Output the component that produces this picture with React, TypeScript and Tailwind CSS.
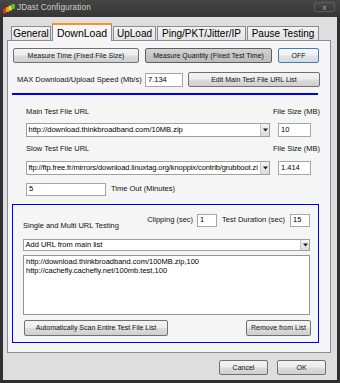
// App.tsx
// JDast Configuration dialog, DownLoad tab.

const btnBase =
  'flex items-center justify-center rounded-[2px] border text-[7px] leading-none text-[#111] whitespace-nowrap';
const btnNormal =
  'border-[#707070] bg-[linear-gradient(#f4f4f4_0%,#ebebeb_48%,#dddddd_52%,#cfcfcf_100%)]';

const Btn = ({ label, className, look = 'normal' }: { label: string; className: string; look?: 'normal' | 'pressed' | 'default' }) => {
  const style =
    look === 'pressed'
      ? 'border-[#5e5e5e] bg-[linear-gradient(#d3d3d3_0%,#c6c6c6_50%,#bdbdbd_100%)]'
      : look === 'default'
        ? 'border-[#3c7fb1] bg-[linear-gradient(#f6f8fa_0%,#eef1f3_48%,#e0e4e7_52%,#d6dbdf_100%)]'
        : btnNormal;
  return <div className={`${btnBase} ${style} ${className}`}>{label}</div>;
};

const TextBox = ({ value, className }: { value: string; className: string }) => (
  <div
    className={`flex items-center bg-white border border-[#a3a6ad] pl-[2px] text-[7.5px] leading-none text-black ${className}`}
  >
    {value}
  </div>
);

const Combo = ({ value, className, textClass = '' }: { value: string; className: string; textClass?: string }) => (
  <div className={`flex items-stretch bg-white border border-[#a0a0a0] ${className}`}>
    <div
      className={`flex-1 min-w-0 flex items-center pl-[1.5px] text-[7.5px] leading-none text-black overflow-hidden whitespace-nowrap ${textClass}`}
    >
      {value}
    </div>
    <div className="w-[9px] flex items-center justify-center border-l border-[#c4c4c4] bg-[linear-gradient(#f3f3f3,#dadada)]">
      <svg width="5" height="4" viewBox="0 0 5 4">
        <path d="M0 0.5h5L2.5 3.5z" fill="#1a1a1a" />
      </svg>
    </div>
  </div>
);

const Label = ({ text, className = '' }: { text: string; className?: string }) => (
  <div className={`text-[7.5px] leading-[10px] text-[#111] whitespace-nowrap ${className}`}>{text}</div>
);

const tabs = [
  { name: 'General', w: 'w-[40px]' },
  { name: 'DownLoad', w: 'w-[60px]', active: true },
  { name: 'UpLoad', w: 'w-[43px]' },
  { name: 'Ping/PKT/Jitter/IP', w: 'w-[89px]' },
  { name: 'Pause Testing', w: 'w-[72px]' },
];

export default function App() {
  return (
    <div className="w-[340px] h-[383px] flex flex-col overflow-hidden bg-[#303030] font-['Liberation_Sans',Arial,sans-serif]">
      {/* title bar */}
      <div className="h-[17px] flex items-center pl-[3px] pr-[5px] bg-[linear-gradient(#464646,#353535)]">
        <svg width="12" height="10" viewBox="0 0 12 10" className="shrink-0">
          <rect x="0" y="4.5" width="3.6" height="5" rx="1" fill="#e2312a" />
          <rect x="2.8" y="3" width="3.6" height="5" rx="1" fill="#f39a1e" />
          <rect x="5.6" y="1.5" width="3.6" height="5" rx="1" fill="#f2d523" />
          <rect x="8.4" y="0" width="3.6" height="5" rx="1" fill="#5cbf2a" />
        </svg>
        <div className="ml-[2px] text-[8.2px] leading-none text-[#cfcfcf] tracking-[0.1px]">JDast Configuration</div>
        <div className="ml-auto mb-[3px] w-[21px] h-[10px] rounded-[2px] border border-[#5d5d5d] bg-[linear-gradient(#4a4a4a,#383838)] flex items-center justify-center text-[7px] leading-none text-[#bdbdbd]">
          x
        </div>
      </div>

      {/* client area */}
      <div className="flex-1 mx-[3px] mb-[3px] bg-[#dedede] flex flex-col">
        {/* tab strip */}
        <div className="relative z-10 h-[23px] flex items-end gap-[1px] pl-[8px]">
          {tabs.map((t) =>
            t.active ? (
              <div
                key={t.name}
                className={`${t.w} h-[18px] -mb-px flex items-center justify-center bg-[#f5f5f5] border-x border-[#898c95] border-t-2 border-t-[#f0962a] text-[10.5px] leading-none text-black`}
              >
                {t.name}
              </div>
            ) : (
              <div
                key={t.name}
                className={`${t.w} h-[14px] flex items-center justify-center border border-b-0 border-[#898c95] bg-[linear-gradient(#f3f3f3,#e2e2e2)] text-[10px] leading-none text-black`}
              >
                {t.name}
              </div>
            ),
          )}
        </div>

        {/* tab panel */}
        <div className="ml-[4px] w-[324px] h-[313px] border border-[#898c95] bg-[#f5f5f5] flex flex-col">
          <div className="mt-[7px] ml-[5px] flex gap-[6px] h-[15px]">
            <Btn label="Measure Time (Fixed File Size)" className="w-[126px]" />
            <Btn label="Measure Quantity (Fixed Test Time)" className="w-[127px]" look="pressed" />
            <Btn label="OFF" className="w-[41px]" look="default" />
          </div>

          <div className="mt-[9px] ml-[9px] flex items-center h-[15px]">
            <Label text="MAX Download/Upload Speed (Mb/s)" className="w-[128px]" />
            <TextBox value="7.134" className="w-[38px] h-[14px]" />
            <Btn label="Edit Main Test File URL List" className="ml-[5px] w-[132px] h-[15px]" />
          </div>

          <div className="mt-[6px] ml-[4px] w-[306px] h-[1.5px] bg-[#0000f0]" />

          <div className="mt-[12px] ml-[18px] flex">
            <Label text="Main Test File URL" className="w-[247px]" />
            <Label text="File Size (MB)" />
          </div>
          <div className="mt-[6px] ml-[18px] flex gap-[8px] h-[14px]">
            <Combo value="http://download.thinkbroadband.com/10MB.zip" className="w-[244px]" />
            <TextBox value="10" className="w-[33px]" />
          </div>

          <div className="mt-[7px] ml-[18px] flex">
            <Label text="Slow Test File URL" className="w-[247px]" />
            <Label text="File Size (MB)" />
          </div>
          <div className="mt-[7px] ml-[18px] flex gap-[8px] h-[14px]">
            <Combo
              value="ftp://ftp.free.fr/mirrors/download.linuxtag.org/knoppix/contrib/grubboot.zi"
              className="w-[244px]"
              textClass="tracking-[-0.1px]"
            />
            <TextBox value="1.414" className="w-[33px]" />
          </div>

          <div className="mt-[8px] ml-[18px] flex items-center h-[13px]">
            <TextBox value="5" className="w-[80px] h-[13px]" />
            <Label text="Time Out (Minutes)" className="ml-[5px]" />
          </div>

          {/* multi URL box */}
          <div className="mt-[8px] ml-[4px] w-[307px] h-[139px] border border-[#0000e8] flex flex-col pl-[10px] pr-[8px] pb-[6px]">
            <div className="mt-[9px] flex justify-between">
              <Label text="Single and Multi URL Testing" className="mt-[7px]" />
              <div className="flex items-center h-[13px]">
                <Label text="Clipping (sec)" />
                <TextBox value="1" className="ml-[4px] w-[20px] h-[13px]" />
                <Label text="Test Duration (sec)" className="ml-[5px]" />
                <TextBox value="15" className="ml-[5px] w-[20px] h-[13px]" />
              </div>
            </div>
            <Combo value="Add URL from main list" className="mt-[8px] h-[13px]" />
            <div className="mt-[4px] h-[63px] bg-white border border-[#8f939a] pt-[1px] pl-[2px] text-[7.5px] leading-[9px] text-black">
              <div>http://download.thinkbroadband.com/100MB.zip,100</div>
              <div>http://cachefly.cachefly.net/100mb.test,100</div>
            </div>
            <div className="mt-[5px] flex justify-between h-[16px]">
              <Btn label="Automatically Scan Entire Test File List" className="ml-[1px] w-[144px]" />
              <Btn label="Remove from List" className="w-[65px] -mr-px" />
            </div>
          </div>
        </div>

        {/* footer */}
        <div className="mt-[7px] pr-[11px] flex justify-end gap-[9px] h-[15px]">
          <Btn label="Cancel" className="w-[49px]" />
          <Btn label="OK" className="w-[49px]" />
        </div>
      </div>
    </div>
  );
}
